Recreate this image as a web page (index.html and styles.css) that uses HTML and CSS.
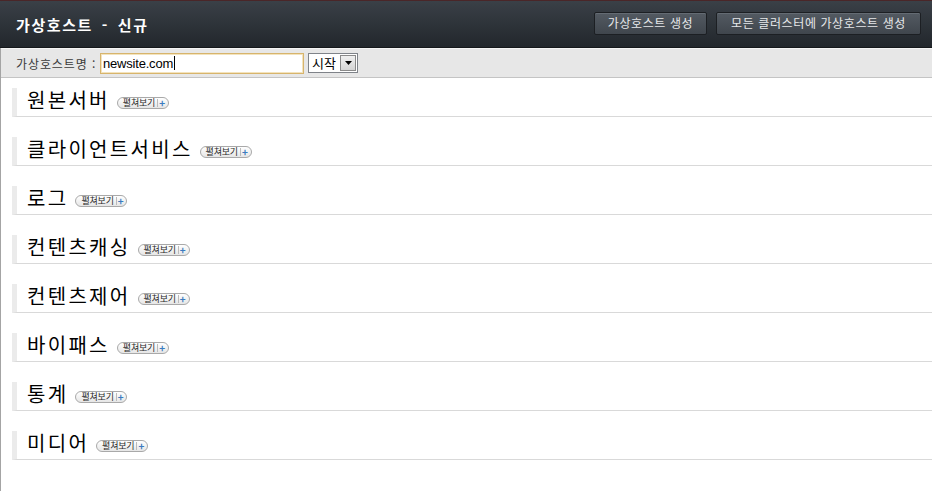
FILE: index.html
```html
<!DOCTYPE html>
<html lang="ko">
<head>
<meta charset="utf-8">
<link rel="stylesheet" href="styles.css">
</head>
<body>
<div class="page">
  <header class="topbar">
    <h1 class="title">가상호스트 - 신규</h1>
    <div class="actions">
      <button class="btn">가상호스트 생성</button>
      <button class="btn">모든 클러스터에 가상호스트 생성</button>
    </div>
  </header>
  <main class="main">
    <div class="toolbar">
      <span class="label">가상호스트명 :</span>
      <div class="input">newsite.com<span class="caret"></span></div>
      <div class="select">
        <span class="select-text">시작</span>
        <span class="select-arrow"><svg width="7" height="4" viewBox="0 0 7 4"><path d="M0 0H7L3.5 4Z" fill="#000"/></svg></span>
      </div>
    </div>
    <div class="sections">
      <section class="sec"><h2 class="sec-title">원본서버</h2><span class="badge">펼쳐보기<i>+</i></span></section>
      <section class="sec"><h2 class="sec-title">클라이언트서비스</h2><span class="badge">펼쳐보기<i>+</i></span></section>
      <section class="sec"><h2 class="sec-title">로그</h2><span class="badge">펼쳐보기<i>+</i></span></section>
      <section class="sec"><h2 class="sec-title">컨텐츠캐싱</h2><span class="badge">펼쳐보기<i>+</i></span></section>
      <section class="sec"><h2 class="sec-title">컨텐츠제어</h2><span class="badge">펼쳐보기<i>+</i></span></section>
      <section class="sec"><h2 class="sec-title">바이패스</h2><span class="badge">펼쳐보기<i>+</i></span></section>
      <section class="sec"><h2 class="sec-title">통계</h2><span class="badge">펼쳐보기<i>+</i></span></section>
      <section class="sec"><h2 class="sec-title">미디어</h2><span class="badge">펼쳐보기<i>+</i></span></section>
    </div>
  </main>
</div>
</body>
</html>
```

FILE: styles.css
```css
* { box-sizing: border-box; }
html, body { margin: 0; padding: 0; background: #fff; }
body {
  font-family: "Noto Sans CJK KR", "Liberation Sans", sans-serif;
  width: 932px;
  height: 491px;
  overflow: hidden;
}
.page { display: flex; flex-direction: column; height: 491px; }

.topbar {
  height: 48px;
  border-top: 1px solid #4a2628;
  background: linear-gradient(#3a4047, #22272c);
  border-bottom: 1px solid #15181b;
  display: flex;
  align-items: center;
  justify-content: space-between;
  padding: 0 11px 0 16px;
}
.title {
  margin: 0;
  color: #fff;
  font-size: 15px;
  font-weight: bold;
  letter-spacing: 1.6px;
  word-spacing: 3px;
  line-height: 20px;
  padding-top: 1px;
}
.actions { display: flex; gap: 9px; padding-bottom: 2px; }
.btn {
  height: 23px;
  padding: 0;
  font-family: "Noto Sans CJK KR", sans-serif;
  font-size: 12px;
  color: #e6e8ea;
  background: linear-gradient(#535a62, #40464d);
  border: 1px solid #1c1f23;
  border-radius: 2px;
  box-shadow: inset 0 1px 0 #646b73;
  line-height: 20px;
  letter-spacing: 0.6px;
}
.btn:first-child { width: 113px; }
.btn:last-child { width: 205px; }

.main {
  flex: 1;
  border-left: 1px solid #a4a4a4;
  display: flex;
  flex-direction: column;
}
.toolbar {
  height: 30px;
  background: #e7e7e7;
  border-top: 1px solid #f4f4f4;
  border-bottom: 1px solid #c4c4c4;
  display: flex;
  align-items: center;
  padding-left: 15px;
}
.label {
  font-size: 12px;
  color: #3a3a3a;
  letter-spacing: 0.9px;
  width: 84px;
}
.input {
  width: 204px;
  height: 21px;
  background: #fff;
  border: 1px solid #d7b46c;
  box-shadow: inset 0 0 0 1px #f3e3bd;
  font-family: "Liberation Sans", sans-serif;
  font-size: 13px;
  line-height: 19px;
  padding-left: 2px;
  color: #000;
  display: flex;
  align-items: center;
  letter-spacing: -0.2px;
}
.caret { display: inline-block; width: 1px; height: 14px; background: #000; margin-left: 1px; }
.select {
  margin-left: 4px;
  width: 50px;
  height: 20px;
  border: 1px solid #7f8389;
  background: #fff;
  display: flex;
  align-items: center;
  justify-content: space-between;
}
.select-text { font-size: 13px; padding-left: 3px; color: #000; line-height: 18px; }
.select-arrow {
  width: 16px;
  height: 16px;
  margin-right: 1px;
  background: linear-gradient(#f0f0f0, #d4d4d4);
  border: 1px solid #8a8a8a;
  display: flex;
  align-items: center;
  justify-content: center;
}

.sections {
  padding: 10px 0 0 11px;
  display: flex;
  flex-direction: column;
  gap: 20px;
}
.sec {
  height: 29px;
  border-left: 5px solid #ebebeb;
  border-bottom: 1px solid #d9d9d9;
  display: flex;
  align-items: center;
  padding-left: 10px;
}
.sec-title {
  margin: 0;
  font-size: 20px;
  font-weight: normal;
  color: #000;
  letter-spacing: 2.3px;
  line-height: 24px;
  margin-top: -5px;
}
.badge {
  margin-left: 7px;
  margin-top: 1px;
  height: 12px;
  padding: 0 3px 0 5px;
  border: 1px solid #a9a9a9;
  border-radius: 6px;
  background: linear-gradient(#ffffff, #e6e6e6);
  font-size: 9px;
  line-height: 10px;
  color: #2a2a2a;
  font-weight: normal;
  display: flex;
  align-items: center;
  letter-spacing: -0.2px;
}
.badge i {
  font-style: normal;
  color: #3b7bbf;
  font-weight: bold;
  font-size: 10px;
  margin-left: 2px;
  padding-left: 1px;
  border-left: 1px solid #bbb;
  line-height: 8px;
}
```
